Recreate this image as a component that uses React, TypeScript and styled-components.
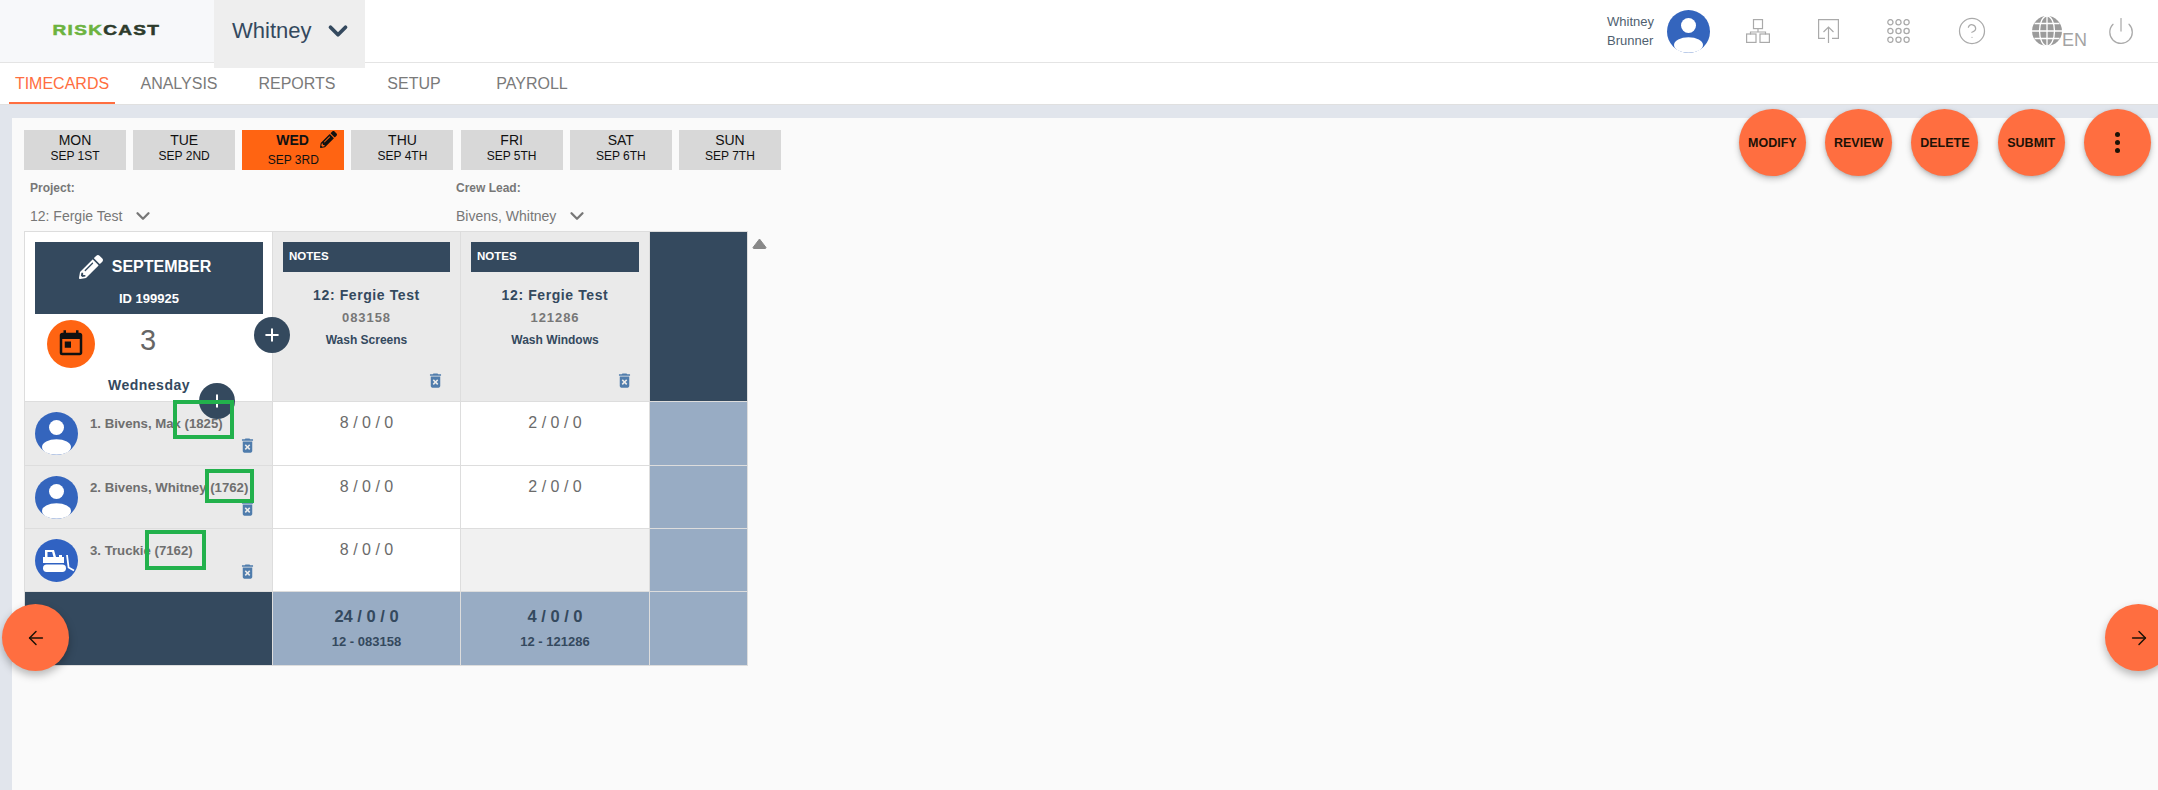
import React from "react";
import styled, { createGlobalStyle } from "styled-components";
import { ArrowLeft, ArrowRight, ChevronDown, CircleHelp, Plus, Power } from "lucide-react";
import { FaPencilAlt } from "react-icons/fa";
import { MdDeleteForever, MdToday } from "react-icons/md";

const DARK = "#34495e";
const ORANGE = "#ff6e40";
const HOT = "#ff6412";
const STEEL = "#98acc4";
const GRID = "#dddddd";

const Global = createGlobalStyle`
  html, body { margin: 0; padding: 0; background: #fafafa; overflow: hidden; }
  * { box-sizing: border-box; }
  body { font-family: "Liberation Sans", Arial, sans-serif; }
`;

const Page = styled.div`
  position: relative;
  width: 2158px;
  height: 790px;
  overflow: hidden;
  display: flex;
  flex-direction: column;
`;

const TopBar = styled.header`
  height: 63px;
  flex: none;
  display: flex;
  background: #fff;
  border-bottom: 1px solid #e4e4e4;
`;

const LogoBlock = styled.div`
  width: 214px;
  height: 62px;
  background: #f7f8fa;
  display: flex;
  align-items: center;
  justify-content: center;
  padding-right: 2px;
`;

const Logo = styled.div`
  display: inline-block;
  font-size: 15px;
  font-weight: 700;
  letter-spacing: 1px;
  line-height: 15px;
  color: #2d3b2b;
  transform: scaleX(1.27);
  -webkit-text-stroke: 0.5px currentColor;
  margin-top: -4px;
  span { color: #6cb33f; }
`;

const AccountSelect = styled.div`
  width: 151px;
  height: 68px;
  background: #eeeeee;
  display: flex;
  align-items: center;
  padding: 0 0 6px 18px;
  gap: 12px;
  font-size: 22px;
  color: ${DARK};
  position: relative;
  z-index: 2;
`;

const TopRight = styled.div`
  margin-left: auto;
  display: flex;
  align-items: center;
  padding-right: 22px;
  height: 62px;
`;

const UserName = styled.div`
  font-size: 13px;
  line-height: 19px;
  color: #4f5f70;
  margin-right: 13px;
`;

const IconSlot = styled.div<{ $gap: number }>`
  margin-left: ${(p) => p.$gap}px;
  display: flex;
  align-items: center;
  color: #aaaaaa;
`;

const GlobeLabel = styled.span`
  font-size: 18px;
  color: #a3a3a3;
  align-self: flex-end;
  line-height: 14px;
  margin-bottom: -1px;
`;

const Nav = styled.nav`
  height: 42px;
  flex: none;
  display: flex;
  padding-left: 9px;
  background: #fff;
  border-bottom: 1px solid #e0e0e0;
`;

const Tab = styled.div<{ $w: number; $active?: boolean }>`
  width: ${(p) => p.$w}px;
  height: 41px;
  display: flex;
  align-items: center;
  justify-content: center;
  padding-top: 2px;
  font-size: 16px;
  color: ${(p) => (p.$active ? ORANGE : "#7a7a7a")};
  border-bottom: 2px solid ${(p) => (p.$active ? ORANGE : "transparent")};
`;

const Body = styled.main`
  flex: 1;
  min-height: 0;
  background: #e1e5ec;
  padding: 13px 0 0 12px;
  display: flex;
`;

const Panel = styled.section`
  flex: 1;
  background: #fafafa;
  padding: 12px 7px 0 12px;
`;

const DayRow = styled.div`
  height: 40px;
  display: flex;
  justify-content: space-between;
`;

const Days = styled.div`
  display: flex;
  gap: 7.17px;
`;

const Day = styled.div<{ $active?: boolean }>`
  width: 102px;
  height: 40px;
  background: ${(p) => (p.$active ? HOT : "#d8d8d8")};
  color: #111;
  display: flex;
  flex-direction: column;
  align-items: center;
  justify-content: flex-start;
  padding-top: 2px;
`;

const DayName = styled.div`
  font-size: 14px;
  line-height: 16px;
`;

const DayDate = styled.div`
  font-size: 12px;
  line-height: 16px;
`;

const ActiveName = styled.div`
  align-self: flex-start;
  padding-left: 34px;
  display: flex;
  align-items: center;
  gap: 11px;
  font-size: 14px;
  font-weight: 700;
  line-height: 16px;
  svg { margin-top: -1px; }
`;

const ActiveDate = styled(DayDate)`
  margin-top: 4px;
`;

const Actions = styled.div`
  display: flex;
  gap: 19.3px;
  margin-top: -21px;
  position: relative;
  z-index: 3;
`;

const Fab = styled.button`
  width: 67px;
  height: 67px;
  border: 0;
  padding: 0;
  border-radius: 50%;
  background: ${ORANGE};
  color: #1c1206;
  font-family: inherit;
  font-size: 12.5px;
  font-weight: 700;
  display: flex;
  align-items: center;
  justify-content: center;
  box-shadow: 0 3px 6px rgba(0, 0, 0, 0.22), 0 1px 3px rgba(0, 0, 0, 0.12);
`;

const Dots = styled.span`
  display: flex;
  flex-direction: column;
  gap: 3px;
  i { display: block; width: 5px; height: 5px; border-radius: 50%; background: #1c1206; }
`;

const SideFab = styled(Fab)<{ $side: "left" | "right" }>`
  position: absolute;
  top: 604px;
  ${(p) => (p.$side === "left" ? "left: 2px;" : "left: 2105px;")}
  z-index: 5;
  box-shadow: 0 4px 8px rgba(0, 0, 0, 0.28);
`;

const Filters = styled.div`
  display: flex;
  padding: 10px 0 0 6px;
  height: 61px;
`;

const Filter = styled.div`
  width: 426px;
`;

const FilterLabel = styled.div`
  font-size: 12px;
  font-weight: 700;
  line-height: 16px;
  color: #777;
`;

const FilterValue = styled.div`
  margin-top: 9px;
  font-size: 14px;
  line-height: 16px;
  color: #777;
  display: flex;
  align-items: center;
  gap: 10px;
`;

const TableRow = styled.div`
  display: flex;
  align-items: flex-start;
`;

const Sheet = styled.div`
  position: relative;
  display: grid;
  grid-template-columns: 247px 187px 188px 97px;
  grid-template-rows: 169px 63px 62px 62px 73px;
  gap: 1px;
  padding: 1px;
  background: ${GRID};
`;

const SortMark = styled.svg`
  margin: 7px 0 0 4px;
`;

const DateCell = styled.div`
  background: #fff;
  padding: 10px 9px 0 10px;
  display: flex;
  flex-direction: column;
`;

const MonthBox = styled.div`
  height: 72px;
  background: ${DARK};
  color: #fff;
  font-weight: 700;
  display: flex;
  flex-direction: column;
  align-items: center;
`;

const MonthTitle = styled.div`
  margin-top: 13px;
  display: flex;
  align-items: center;
  gap: 9px;
  font-size: 16px;
  line-height: 20px;
  margin-left: -8px;
`;

const MonthId = styled.div`
  margin-top: 12px;
  font-size: 13px;
  line-height: 16px;
`;

const DateMiddle = styled.div`
  display: flex;
  margin-top: 6px;
  padding-left: 12px;
`;

const CalBadge = styled.div`
  width: 48px;
  height: 48px;
  border-radius: 50%;
  background: ${HOT};
  color: #111;
  display: flex;
  align-items: center;
  justify-content: center;
`;

const DayNumber = styled.div`
  width: 106px;
  text-align: center;
  font-size: 29px;
  line-height: 40px;
  color: #666;
`;

const Weekday = styled.div`
  width: 228px;
  margin-top: 8px;
  text-align: center;
  font-size: 14px;
  font-weight: 700;
  letter-spacing: 0.5px;
  line-height: 18px;
  color: ${DARK};
`;

const TaskCell = styled.div`
  background: #eaeaea;
  padding: 10px 10px 0;
  display: flex;
  flex-direction: column;
  align-items: center;
`;

const NotesBar = styled.div`
  align-self: stretch;
  height: 30px;
  background: ${DARK};
  color: #fff;
  font-size: 11.5px;
  font-weight: 700;
  line-height: 28px;
  padding-left: 6px;
`;

const TaskProject = styled.div`
  margin-top: 15px;
  font-size: 14px;
  font-weight: 700;
  letter-spacing: 0.6px;
  line-height: 16px;
  color: ${DARK};
`;

const TaskCode = styled.div`
  margin-top: 7px;
  font-size: 13px;
  font-weight: 700;
  letter-spacing: 0.9px;
  line-height: 16px;
  color: #777;
`;

const TaskName = styled.div`
  margin-top: 6px;
  font-size: 12px;
  font-weight: 700;
  line-height: 16px;
  color: ${DARK};
`;

const TrashSlot = styled.div`
  margin-top: auto;
  align-self: flex-end;
  color: #4f7cac;
  display: flex;
`;

const TaskTrash = styled(TrashSlot)`
  margin-right: 5px;
  margin-bottom: 11px;
`;

const DarkFill = styled.div`
  background: ${DARK};
`;

const SteelFill = styled.div`
  background: ${STEEL};
`;

const PersonCell = styled.div`
  background: #eaeaea;
  display: flex;
  align-items: center;
  padding-left: 10px;
  gap: 12px;
`;

const PersonInfo = styled.div`
  flex: 1;
  align-self: stretch;
  min-width: 0;
  padding: 14px 15px 10px 0;
  display: flex;
  flex-direction: column;
`;

const PersonName = styled.div`
  font-size: 13.2px;
  font-weight: 700;
  line-height: 15px;
  white-space: nowrap;
  color: #6f6f6f;
`;

const HoursCell = styled.div<{ $empty?: boolean }>`
  background: ${(p) => (p.$empty ? "#f1f1f1" : "#fff")};
  padding-top: 12px;
  text-align: center;
  font-size: 16px;
  line-height: 18px;
  color: #6b6b6b;
`;

const TotalCell = styled(SteelFill)`
  display: flex;
  flex-direction: column;
  align-items: center;
  color: ${DARK};
  font-weight: 700;
  padding-top: 15px;
`;

const TotalHours = styled.div`
  font-size: 16.5px;
  line-height: 18px;
`;

const TotalCode = styled.div`
  margin-top: 9px;
  font-size: 13px;
  line-height: 16px;
`;

const AddButton = styled.button<{ $x: number; $y: number }>`
  position: absolute;
  left: ${(p) => p.$x}px;
  top: ${(p) => p.$y}px;
  width: 36px;
  height: 36px;
  padding: 0;
  border: 0;
  border-radius: 50%;
  background: ${DARK};
  color: #fff;
  display: flex;
  align-items: center;
  justify-content: center;
  z-index: 2;
`;

const Highlight = styled.div<{ $x: number; $y: number; $w: number; $h: number }>`
  position: absolute;
  left: ${(p) => p.$x}px;
  top: ${(p) => p.$y}px;
  width: ${(p) => p.$w}px;
  height: ${(p) => p.$h}px;
  border: 4px solid #22b14c;
  z-index: 3;
`;

const Avatar = () => (
  <svg width="43" height="43" viewBox="0 0 43 43" style={{ flex: "none" }}>
    <circle cx="21.5" cy="21.5" r="21.5" fill="#3465bd" />
    <circle cx="21.5" cy="15.5" r="7.5" fill="#fff" />
    <ellipse cx="21.5" cy="35" rx="14.5" ry="7.7" fill="#fff" />
  </svg>
);

const Dozer = () => (
  <svg width="43" height="43" viewBox="0 0 43 43" style={{ flex: "none" }}>
    <circle cx="21.5" cy="21.5" r="21.5" fill="#3062c2" />
    <path
      fill="#fff"
      fillRule="evenodd"
      d="M10 11h9l2 7h3v-2h3v2h2v6H8v-6h2zM12.5 13v5h6l-1.4-5z"
    />
    <rect x="8" y="25.5" width="23" height="7.5" rx="3.7" fill="#fff" />
    <path d="M32 16l1.6 12.5 5.4 3" fill="none" stroke="#fff" strokeWidth="1.8" />
  </svg>
);

const OrgIcon = () => (
  <svg width="24" height="24" viewBox="0 0 24 24" fill="none" stroke="#aaa" strokeWidth="1.2">
    <rect x="7.5" y="0.6" width="9" height="9" />
    <path d="M12 9.6v3.4M4.5 15.5V13h15v2.5" />
    <rect x="0.6" y="15" width="9.4" height="8.4" />
    <rect x="14" y="15" width="9.4" height="8.4" />
  </svg>
);

const ShareIcon = () => (
  <svg width="21" height="24" viewBox="0 0 21 24" fill="none" stroke="#aaa" strokeWidth="1.2">
    <path d="M7 19.4H0.6V0.6h19.8v18.8H14" />
    <path d="M10.5 24V8M5.5 13l5-5 5 5" />
  </svg>
);

const DotsIcon = () => (
  <svg width="23" height="24" viewBox="0 0 23 24" fill="none" stroke="#aaa" strokeWidth="1.3">
    {[3.4, 11.5, 19.6].map((x) =>
      [3.2, 12, 20.8].map((y) => <circle key={`${x}-${y}`} cx={x} cy={y} r="2.6" />)
    )}
  </svg>
);

const GlobeIcon = () => (
  <svg width="30" height="30" viewBox="0 0 30 30">
    <circle cx="15" cy="15" r="15" fill="#9b9b9b" />
    <g fill="none" stroke="#fff" strokeWidth="1.3">
      <ellipse cx="15" cy="15" rx="7.5" ry="15" />
      <path d="M15 0v30M0 15h30M2.5 7.5h25M2.5 22.5h25" />
    </g>
  </svg>
);

const Trash = () => <MdDeleteForever size={19} />;

const days = [
  ["MON", "SEP 1ST"],
  ["TUE", "SEP 2ND"],
  ["WED", "SEP 3RD"],
  ["THU", "SEP 4TH"],
  ["FRI", "SEP 5TH"],
  ["SAT", "SEP 6TH"],
  ["SUN", "SEP 7TH"],
];

const tabs: [string, number][] = [
  ["TIMECARDS", 106],
  ["ANALYSIS", 128],
  ["REPORTS", 108],
  ["SETUP", 126],
  ["PAYROLL", 110],
];

const tasks = [
  { code: "083158", name: "Wash Screens" },
  { code: "121286", name: "Wash Windows" },
];

const people = [
  { name: "1. Bivens, Max (1825)", hours: ["8 / 0 / 0", "2 / 0 / 0"], icon: <Avatar /> },
  { name: "2. Bivens, Whitney (1762)", hours: ["8 / 0 / 0", "2 / 0 / 0"], icon: <Avatar /> },
  { name: "3. Truckie (7162)", hours: ["8 / 0 / 0", ""], icon: <Dozer /> },
];

export default function App() {
  return (
    <Page>
      <Global />
      <TopBar>
        <LogoBlock>
          <Logo>
            <span>RISK</span>CAST
          </Logo>
        </LogoBlock>
        <AccountSelect>
          Whitney
          <ChevronDown size={30} strokeWidth={3} />
        </AccountSelect>
        <TopRight>
          <UserName>
            Whitney
            <br />
            Brunner
          </UserName>
          <Avatar />
          <IconSlot $gap={36}><OrgIcon /></IconSlot>
          <IconSlot $gap={48}><ShareIcon /></IconSlot>
          <IconSlot $gap={48}><DotsIcon /></IconSlot>
          <IconSlot $gap={47}><CircleHelp size={30} strokeWidth={1} /></IconSlot>
          <IconSlot $gap={45}>
            <GlobeIcon />
            <GlobeLabel>EN</GlobeLabel>
          </IconSlot>
          <IconSlot $gap={19}><Power size={30} strokeWidth={1} /></IconSlot>
        </TopRight>
      </TopBar>

      <Nav>
        {tabs.map(([label, w], i) => (
          <Tab key={label} $w={w} $active={i === 0}>
            {label}
          </Tab>
        ))}
      </Nav>

      <Body>
        <Panel>
          <DayRow>
            <Days>
              {days.map(([d, date]) =>
                d === "WED" ? (
                  <Day key={d} $active>
                    <ActiveName>
                      {d}
                      <FaPencilAlt size={17} />
                    </ActiveName>
                    <ActiveDate>{date}</ActiveDate>
                  </Day>
                ) : (
                  <Day key={d}>
                    <DayName>{d}</DayName>
                    <DayDate>{date}</DayDate>
                  </Day>
                )
              )}
            </Days>
            <Actions>
              <Fab>MODIFY</Fab>
              <Fab>REVIEW</Fab>
              <Fab>DELETE</Fab>
              <Fab>SUBMIT</Fab>
              <Fab aria-label="More">
                <Dots><i /><i /><i /></Dots>
              </Fab>
            </Actions>
          </DayRow>

          <Filters>
            <Filter>
              <FilterLabel>Project:</FilterLabel>
              <FilterValue>
                12: Fergie Test
                <ChevronDown size={22} strokeWidth={2.5} />
              </FilterValue>
            </Filter>
            <Filter>
              <FilterLabel>Crew Lead:</FilterLabel>
              <FilterValue>
                Bivens, Whitney
                <ChevronDown size={22} strokeWidth={2.5} />
              </FilterValue>
            </Filter>
          </Filters>

          <TableRow>
            <Sheet>
              <DateCell>
                <MonthBox>
                  <MonthTitle>
                    <FaPencilAlt size={24} />
                    SEPTEMBER
                  </MonthTitle>
                  <MonthId>ID 199925</MonthId>
                </MonthBox>
                <DateMiddle>
                  <CalBadge><MdToday size={30} /></CalBadge>
                  <DayNumber>3</DayNumber>
                </DateMiddle>
                <Weekday>Wednesday</Weekday>
              </DateCell>
              {tasks.map((t) => (
                <TaskCell key={t.code}>
                  <NotesBar>NOTES</NotesBar>
                  <TaskProject>12: Fergie Test</TaskProject>
                  <TaskCode>{t.code}</TaskCode>
                  <TaskName>{t.name}</TaskName>
                  <TaskTrash><Trash /></TaskTrash>
                </TaskCell>
              ))}
              <DarkFill />

              {people.map((p) => (
                <React.Fragment key={p.name}>
                  <PersonCell>
                    {p.icon}
                    <PersonInfo>
                      <PersonName>{p.name}</PersonName>
                      <TrashSlot><Trash /></TrashSlot>
                    </PersonInfo>
                  </PersonCell>
                  {p.hours.map((h, i) => (
                    <HoursCell key={i} $empty={!h}>{h}</HoursCell>
                  ))}
                  <SteelFill />
                </React.Fragment>
              ))}

              <DarkFill />
              <TotalCell>
                <TotalHours>24 / 0 / 0</TotalHours>
                <TotalCode>12 - 083158</TotalCode>
              </TotalCell>
              <TotalCell>
                <TotalHours>4 / 0 / 0</TotalHours>
                <TotalCode>12 - 121286</TotalCode>
              </TotalCell>
              <SteelFill />

              <AddButton $x={230} $y={86} aria-label="Add task"><Plus size={20} strokeWidth={2.4} /></AddButton>
              <AddButton $x={175} $y={152} aria-label="Add person"><Plus size={20} strokeWidth={2.4} /></AddButton>
              <Highlight $x={149} $y={169} $w={61} $h={39} />
              <Highlight $x={181} $y={238} $w={49} $h={34} />
              <Highlight $x={121} $y={299} $w={61} $h={40} />
            </Sheet>
            <SortMark width="15" height="11" viewBox="0 0 15 11">
              <path d="M7.5 1L14 9.5Q14 10.5 13 10.5H2Q1 10.5 1 9.5z" fill="#888" stroke="#888" strokeLinejoin="round" />
            </SortMark>
          </TableRow>
        </Panel>
      </Body>

      <SideFab $side="left" aria-label="Previous"><ArrowLeft size={22} strokeWidth={1.6} /></SideFab>
      <SideFab $side="right" aria-label="Next"><ArrowRight size={22} strokeWidth={1.6} /></SideFab>
    </Page>
  );
}
